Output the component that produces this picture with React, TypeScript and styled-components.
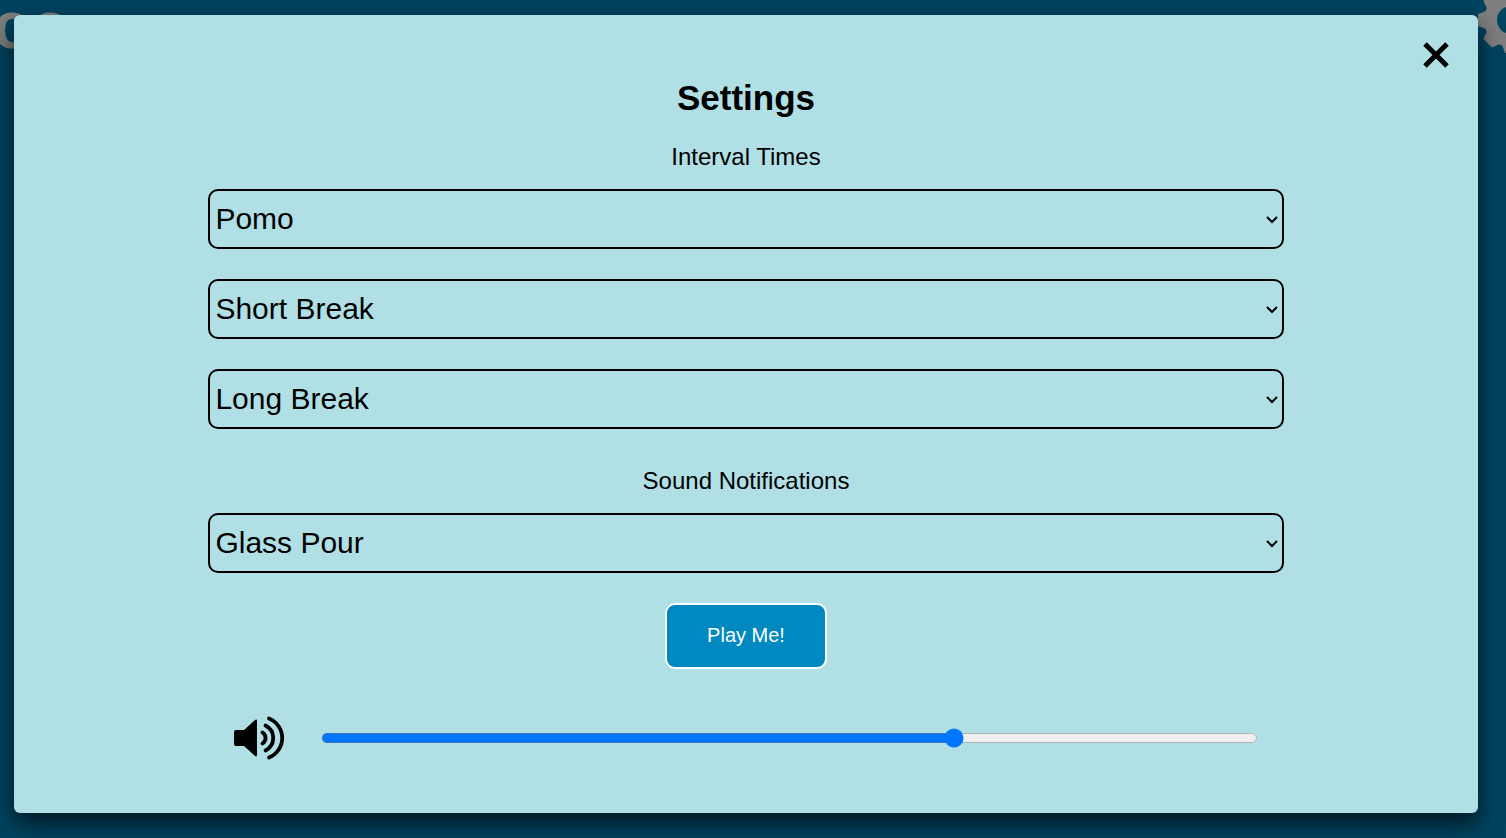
import React, { useState } from "react";
import styled, { createGlobalStyle } from "styled-components";

const GlobalStyle = createGlobalStyle`
  *, *::before, *::after { box-sizing: border-box; }
  body {
    margin: 0;
    background: #0089c1;
    color: #000;
    font-family: "Liberation Sans", Arial, sans-serif;
  }
`;

const Page = styled.div`
  min-height: 100vh;
  overflow: hidden;
`;

const Header = styled.header`
  display: flex;
  justify-content: space-between;
  align-items: flex-start;
  height: 60px;
  margin: 0 -39px 0 -7px;
  color: #fff;
`;

const Brand = styled.div`
  font-size: 66px;
  font-weight: 700;
  line-height: 50px;
`;

const GearIcon = styled.svg`
  flex: none;
  width: 68px;
  height: 68px;
  margin-top: -14px;
  fill: currentColor;
`;

const Overlay = styled.div`
  position: absolute;
  inset: 0;
  display: flex;
  min-height: 100vh;
  padding: 15px 28px 25px 14px;
  background: rgba(0, 0, 0, 0.5);
`;

const Dialog = styled.section`
  position: relative;
  flex: 1;
  display: flex;
  flex-direction: column;
  align-items: center;
  padding: 63px 60px 50px;
  border-radius: 6px;
  background: #b0e0e6;
  box-shadow: 0 10px 25px rgba(0, 0, 0, 0.7);
`;

const CloseButton = styled.button`
  position: absolute;
  top: 20px;
  right: 22px;
  display: grid;
  place-items: center;
  width: 40px;
  height: 40px;
  padding: 0;
  border: 0;
  background: none;
  cursor: pointer;

  svg {
    width: 28px;
    height: 28px;
    stroke: #000;
    stroke-width: 5;
  }
`;

const Title = styled.h1`
  margin: 0;
  font-size: 35px;
  line-height: 40px;
`;

const Form = styled.form`
  display: flex;
  flex-direction: column;
  align-items: center;
  width: 80%;
  margin-top: 25px;
`;

const Group = styled.fieldset`
  display: flex;
  flex-direction: column;
  gap: 30px;
  width: 100%;
  min-width: 0;
  margin: 0;
  padding: 0;
  border: 0;

  & + & {
    margin-top: 38px;
  }
`;

const GroupTitle = styled.legend`
  width: 100%;
  padding: 0 0 18px;
  font-size: 24px;
  line-height: 28px;
  text-align: center;
`;

const Select = styled.select`
  zoom: 1.25;
  width: 100%;
  height: 48px;
  padding: 0 0 1px;
  border: 2px solid #000;
  border-radius: 8px;
  background-color: #b0e0e6;
  color: #000;
  font-family: inherit;
  font-size: 24px;
`;

const PlayButton = styled.button`
  width: 162px;
  height: 66px;
  margin-top: 30px;
  padding: 0 0 2px;
  border: 2px solid #fff;
  border-radius: 10px;
  background: #0089c1;
  color: #fff;
  font-family: inherit;
  font-size: 20px;
  cursor: pointer;
`;

const VolumeRow = styled.div`
  display: flex;
  align-items: center;
  gap: 35px;
  width: 100%;
  margin-top: 44px;
  padding: 0 26px;
`;

const SpeakerIcon = styled.svg`
  flex: none;
  width: 52px;
  height: 50px;
`;

const Slider = styled.input`
  zoom: 1.25;
  flex: 1;
  min-width: 0;
  margin: 0;
`;

const intervals = [
  { name: "Pomo", minutes: [25, 30, 45] },
  { name: "Short Break", minutes: [5, 10, 15] },
  { name: "Long Break", minutes: [15, 20, 30] },
];

const toothAngles = [0, 45, 90, 135, 180, 225, 270, 315];

function Gear() {
  return (
    <GearIcon viewBox="0 0 68 68" aria-hidden="true">
      <mask id="gear-hole">
        <rect width="68" height="68" fill="#fff" />
        <circle cx="34" cy="34" r="14" fill="#000" />
      </mask>
      <g mask="url(#gear-hole)">
        <circle cx="34" cy="34" r="27" />
        {toothAngles.map((a) => (
          <path key={a} d="M24 12 L28 1 H40 L44 12 Z" transform={`rotate(${a} 34 34)`} />
        ))}
      </g>
    </GearIcon>
  );
}

export default function App() {
  const [volume, setVolume] = useState(68);

  return (
    <Page>
      <GlobalStyle />
      <Header aria-hidden="true">
        <Brand>co</Brand>
        <Gear />
      </Header>
      <Overlay>
        <Dialog role="dialog" aria-modal="true" aria-labelledby="settings-title">
          <CloseButton type="button" aria-label="Close">
            <svg viewBox="0 0 28 28">
              <path d="M3 3 L25 25 M25 3 L3 25" />
            </svg>
          </CloseButton>
          <Title id="settings-title">Settings</Title>
          <Form>
            <Group>
              <GroupTitle>Interval Times</GroupTitle>
              {intervals.map(({ name, minutes }) => (
                <Select key={name} aria-label={name} defaultValue="">
                  <option value="">{name}</option>
                  {minutes.map((m) => (
                    <option key={m} value={m}>
                      {m}
                    </option>
                  ))}
                </Select>
              ))}
            </Group>
            <Group>
              <GroupTitle>Sound Notifications</GroupTitle>
              <Select aria-label="Sound" defaultValue="glass">
                <option value="glass">Glass Pour</option>
              </Select>
            </Group>
            <PlayButton type="button">Play Me!</PlayButton>
            <VolumeRow>
              <SpeakerIcon viewBox="0 0 52 50" aria-hidden="true">
                <path d="M2 17 H10 L20.500 7.500 Q23 5.500 23 8 V42 Q23 44.500 20.500 42.500 L10 33 H2 Q0 33 0 31 V19 Q0 17 2 17 Z" />
                <g fill="none" stroke="#000" strokeWidth="3.800" strokeLinecap="round">
                  <path d="M28.500 19.500 A6.500 6.500 0 0 1 28.500 30.500" />
                  <path d="M31.500 12.500 A14 14 0 0 1 31.500 37.500" />
                  <path d="M35 5.500 A21 21 0 0 1 35 44.500" />
                </g>
              </SpeakerIcon>
              <Slider
                type="range"
                min={0}
                max={100}
                value={volume}
                aria-label="Volume"
                onChange={(e: React.ChangeEvent<HTMLInputElement>) => setVolume(Number(e.target.value))}
              />
            </VolumeRow>
          </Form>
        </Dialog>
      </Overlay>
    </Page>
  );
}
